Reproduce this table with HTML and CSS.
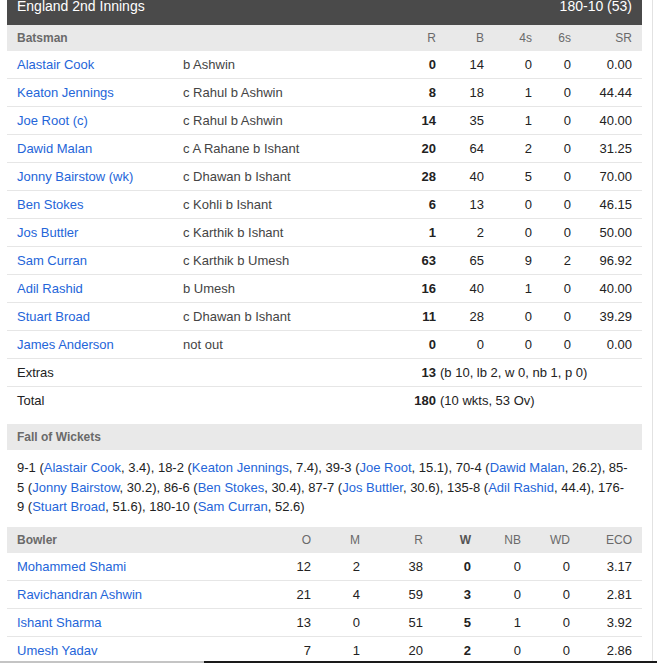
FILE: index.html
```html
<!DOCTYPE html>
<html>
<head>
<meta charset="utf-8">
<link rel="stylesheet" href="styles.css">
</head>
<body>
<div class="page">
  <div class="card">
    <div class="inn-head">
      <span>England 2nd Innings</span>
      <span>180-10 (53)</span>
    </div>

    <div class="bat row head">
      <div class="th-name">Batsman</div><div></div>
      <div class="num">R</div><div class="num">B</div><div class="num">4s</div><div class="num">6s</div><div class="num">SR</div>
    </div>

    <div class="bat row"><a class="name">Alastair Cook</a><div class="dis">b Ashwin</div><div class="num b">0</div><div class="num">14</div><div class="num">0</div><div class="num">0</div><div class="num">0.00</div></div>
    <div class="bat row"><a class="name">Keaton Jennings</a><div class="dis">c Rahul b Ashwin</div><div class="num b">8</div><div class="num">18</div><div class="num">1</div><div class="num">0</div><div class="num">44.44</div></div>
    <div class="bat row"><a class="name">Joe Root (c)</a><div class="dis">c Rahul b Ashwin</div><div class="num b">14</div><div class="num">35</div><div class="num">1</div><div class="num">0</div><div class="num">40.00</div></div>
    <div class="bat row"><a class="name">Dawid Malan</a><div class="dis">c A Rahane b Ishant</div><div class="num b">20</div><div class="num">64</div><div class="num">2</div><div class="num">0</div><div class="num">31.25</div></div>
    <div class="bat row"><a class="name">Jonny Bairstow (wk)</a><div class="dis">c Dhawan b Ishant</div><div class="num b">28</div><div class="num">40</div><div class="num">5</div><div class="num">0</div><div class="num">70.00</div></div>
    <div class="bat row"><a class="name">Ben Stokes</a><div class="dis">c Kohli b Ishant</div><div class="num b">6</div><div class="num">13</div><div class="num">0</div><div class="num">0</div><div class="num">46.15</div></div>
    <div class="bat row"><a class="name">Jos Buttler</a><div class="dis">c Karthik b Ishant</div><div class="num b">1</div><div class="num">2</div><div class="num">0</div><div class="num">0</div><div class="num">50.00</div></div>
    <div class="bat row"><a class="name">Sam Curran</a><div class="dis">c Karthik b Umesh</div><div class="num b">63</div><div class="num">65</div><div class="num">9</div><div class="num">2</div><div class="num">96.92</div></div>
    <div class="bat row"><a class="name">Adil Rashid</a><div class="dis">b Umesh</div><div class="num b">16</div><div class="num">40</div><div class="num">1</div><div class="num">0</div><div class="num">40.00</div></div>
    <div class="bat row"><a class="name">Stuart Broad</a><div class="dis">c Dhawan b Ishant</div><div class="num b">11</div><div class="num">28</div><div class="num">0</div><div class="num">0</div><div class="num">39.29</div></div>
    <div class="bat row"><a class="name">James Anderson</a><div class="dis">not out</div><div class="num b">0</div><div class="num">0</div><div class="num">0</div><div class="num">0</div><div class="num">0.00</div></div>

    <div class="bat row"><div class="plain">Extras</div><div></div><div class="num b">13</div><div class="rest">(b 10, lb 2, w 0, nb 1, p 0)</div></div>
    <div class="bat row last"><div class="plain">Total</div><div></div><div class="num b">180</div><div class="rest">(10 wkts, 53 Ov)</div></div>

    <div class="sec-head">Fall of Wickets</div>
    <p class="fow">9-1 (<a>Alastair Cook</a>, 3.4), 18-2 (<a>Keaton Jennings</a>, 7.4), 39-3 (<a>Joe Root</a>, 15.1), 70-4 (<a>Dawid Malan</a>, 26.2), 85-5 (<a>Jonny Bairstow</a>, 30.2), 86-6 (<a>Ben Stokes</a>, 30.4), 87-7 (<a>Jos Buttler</a>, 30.6), 135-8 (<a>Adil Rashid</a>, 44.4), 176-9 (<a>Stuart Broad</a>, 51.6), 180-10 (<a>Sam Curran</a>, 52.6)</p>

    <div class="bowl row head">
      <div class="th-name">Bowler</div>
      <div class="num">O</div><div class="num">M</div><div class="num">R</div><div class="num hb">W</div><div class="num">NB</div><div class="num">WD</div><div class="num">ECO</div>
    </div>
    <div class="bowl row"><a class="name">Mohammed Shami</a><div class="num">12</div><div class="num">2</div><div class="num">38</div><div class="num b">0</div><div class="num">0</div><div class="num">0</div><div class="num">3.17</div></div>
    <div class="bowl row"><a class="name">Ravichandran Ashwin</a><div class="num">21</div><div class="num">4</div><div class="num">59</div><div class="num b">3</div><div class="num">0</div><div class="num">0</div><div class="num">2.81</div></div>
    <div class="bowl row"><a class="name">Ishant Sharma</a><div class="num">13</div><div class="num">0</div><div class="num">51</div><div class="num b">5</div><div class="num">1</div><div class="num">0</div><div class="num">3.92</div></div>
    <div class="bowl row"><a class="name">Umesh Yadav</a><div class="num">7</div><div class="num">1</div><div class="num">20</div><div class="num b">2</div><div class="num">0</div><div class="num">0</div><div class="num">2.86</div></div>
  </div>
</div>
<div class="hbar"></div>
</body>
</html>
```

FILE: styles.css
```css
html, body {
  margin: 0;
  padding: 0;
  overflow: hidden;
  background: #fff;
}
body {
  font-family: "Liberation Sans", Arial, sans-serif;
  font-size: 13px;
  color: #222;
}
.page {
  width: 653px;
  height: 663px;
  padding-left: 7px;
  padding-right: 10px;
  box-sizing: border-box;
  border-right: 1px solid #e2e2e2;
}
.card {
  width: 635px;
}
.inn-head {
  display: flex;
  justify-content: space-between;
  height: 25px;
  background: #4a4a4a;
  color: #fff;
  font-size: 14px;
  line-height: 13px;
  padding: 0 10px;
}
.row {
  display: grid;
  align-items: center;
  padding: 0 10px;
  height: 27px;
  border-bottom: 1px solid #e6e6e6;
}
.row.head {
  height: 26px;
  border-bottom: none;
  background: #e9e9e9;
  color: #6a6a6a;
  font-size: 12px;
}
.row.last {
  border-bottom: none;
}
.bat {
  grid-template-columns: 166px 213px 40px 48px 48px 39px 61px;
}
.bowl {
  grid-template-columns: 254px 40px 49px 63px 48px 50px 49px 62px;
}
.th-name {
  font-weight: bold;
}
.name, .fow a {
  color: #2465d9;
  text-decoration: none;
}
.dis {
  color: #444;
}
.num {
  text-align: right;
}
.b {
  font-weight: bold;
}
.hb {
  font-weight: bold;
  color: #555;
}
.rest {
  grid-column: 4 / 8;
  padding-left: 4px;
  white-space: nowrap;
}
.plain {
  color: #222;
}
.sec-head {
  margin-top: 10px;
  height: 26px;
  line-height: 26px;
  background: #e9e9e9;
  color: #6a6a6a;
  font-size: 12px;
  font-weight: bold;
  padding: 0 10px;
}
.fow {
  margin: 0;
  padding: 8px 13px 10px 10px;
  line-height: 19.5px;
}
.hbar {
  position: fixed;
  left: 0;
  top: 661px;
  width: 657px;
  height: 2px;
  background: linear-gradient(to right, #c4c4c4 0, #c4c4c4 204px, #1a1a1a 204px);
}
```
